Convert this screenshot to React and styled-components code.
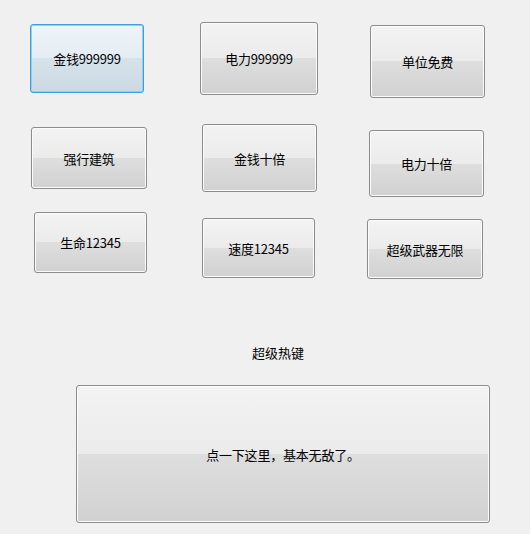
import React from 'react'
import styled, { createGlobalStyle, css } from 'styled-components'

const GlobalStyle = createGlobalStyle`
  html, body {
    margin: 0;
    padding: 0;
    background: #f0f0f0;
  }
  body {
    font-family: "Noto Sans CJK SC", "Noto Sans", sans-serif;
    font-size: 13px;
    color: #000;
  }
`

const Window = styled.div`
  width: 530px;
  height: 534px;
  background: #f0f0f0;
  overflow: hidden;
`

const Board = styled.div`
  display: grid;
  grid-template-columns: 170px 167px 1fr;
  grid-template-rows: 102px 88px auto;
  padding: 22px 0 0 30px;
`

const Cell = styled.div`
  display: flex;
  align-items: flex-start;
`

const Button = styled.button`
  box-sizing: border-box;
  width: ${p => p.w}px;
  height: ${p => p.h}px;
  margin: ${p => p.dy || 0}px 0 0 ${p => p.dx || 0}px;
  display: flex;
  align-items: center;
  justify-content: center;
  padding: 0;
  font-family: inherit;
  font-size: 13px;
  letter-spacing: -0.2px;
  color: #000;
  border: 1px solid #8c8c8c;
  border-radius: 3px;
  box-shadow: inset 0 0 0 1px #fbfbfb;
  background: linear-gradient(
    to bottom,
    #f3f3f3 0%,
    #ebebeb 50%,
    #dedede 50%,
    #d1d1d1 100%
  );
  cursor: default;

  ${p => p.focused && css`
    border-color: #3c9fd8;
    box-shadow: inset 0 0 0 1px #8fd0f2;
    background: linear-gradient(
      to bottom,
      #eef4f8 0%,
      #e4edf3 50%,
      #d7e3eb 50%,
      #cbd9e2 100%
    );
  `}
`

const HotKeys = styled.section`
  display: flex;
  flex-direction: column;
  width: 414px;
  margin: 65px 0 0 76px;
`

const Caption = styled.div`
  text-align: center;
  padding-right: 10px;
  line-height: 18px;
  margin-bottom: 23px;
`

const BigButton = styled(Button)`
  width: 100%;
`

const cheats = [
  { label: '金钱999999', w: 114, h: 69, dx: 0, dy: 2, focused: true },
  { label: '电力999999', w: 118, h: 73, dx: 0, dy: 0 },
  { label: '单位免费', w: 115, h: 73, dx: 3, dy: 3 },
  { label: '强行建筑', w: 116, h: 62, dx: 1, dy: 3 },
  { label: '金钱十倍', w: 115, h: 68, dx: 2, dy: 0 },
  { label: '电力十倍', w: 115, h: 67, dx: 2, dy: 6 },
  { label: '生命12345', w: 113, h: 61, dx: 4, dy: 0 },
  { label: '速度12345', w: 113, h: 60, dx: 2, dy: 6 },
  { label: '超级武器无限', w: 116, h: 60, dx: 0, dy: 7 },
]

export default function App() {
  return (
    <Window>
      <GlobalStyle />
      <Board>
        {cheats.map(c => (
          <Cell key={c.label}>
            <Button w={c.w} h={c.h} dx={c.dx} dy={c.dy} focused={c.focused}>
              {c.label}
            </Button>
          </Cell>
        ))}
      </Board>
      <HotKeys>
        <Caption>超级热键</Caption>
        <BigButton h={138}>点一下这里，基本无敌了。</BigButton>
      </HotKeys>
    </Window>
  )
}
